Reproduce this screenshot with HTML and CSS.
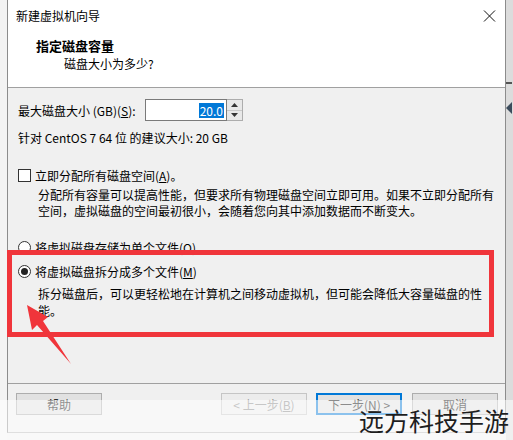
FILE: index.html
```html
<!DOCTYPE html>
<html lang="zh-CN">
<head>
    <meta charset="UTF-8">
    <title>新建虚拟机向导</title>
    <link rel="stylesheet" href="styles.css">
</head>
<body>

    <div class="page">
        <div class="side-left"></div>

        <div class="window">
            <div class="titlebar">
                <span>新建虚拟机向导</span>
                <svg class="close" width="13" height="12" viewBox="0 0 13 12">
                    <path d="M1 0.5 L12 11.5 M12 0.5 L1 11.5" stroke="#111" stroke-width="1" fill="none"/>
                </svg>
            </div>

            <div class="header">
                <h1>指定磁盘容量</h1>
                <p>磁盘大小为多少?</p>
            </div>

            <div class="content">
                <div class="size-row">
                    <span class="size-label">最大磁盘大小 (GB)(<u>S</u>):</span>
                    <div class="spin">
                        <div class="spin-field"><span class="sel">20.0</span></div>
                        <div class="spin-btns">
                            <div class="spin-btn"><svg width="7" height="4" viewBox="0 0 7 4"><path d="M0 4 L3.5 0 L7 4 Z" fill="#333"/></svg></div>
                            <div class="spin-btn"><svg width="7" height="4" viewBox="0 0 7 4"><path d="M0 0 L3.5 4 L7 0 Z" fill="#333"/></svg></div>
                        </div>
                    </div>
                </div>

                <div class="hint">针对 CentOS 7 64 位 的建议大小: 20 GB</div>

                <div class="option opt-alloc">
                    <span class="checkbox"></span>
                    <span>立即分配所有磁盘空间(<u>A</u>)。</span>
                </div>
                <p class="desc desc-alloc">分配所有容量可以提高性能，但要求所有物理磁盘空间立即可用。如果不立即分配所有<br>空间，虚拟磁盘的空间最初很小，会随着您向其中添加数据而不断变大。</p>

                <div class="option opt-single">
                    <span class="radio"></span>
                    <span>将虚拟磁盘存储为单个文件(<u>O</u>)</span>
                </div>
                <div class="option opt-multi">
                    <span class="radio checked"></span>
                    <span>将虚拟磁盘拆分成多个文件(<u>M</u>)</span>
                </div>
                <p class="desc desc-multi">拆分磁盘后，可以更轻松地在计算机之间移动虚拟机，但可能会降低大容量磁盘的性能。</p>
            </div>

            <div class="footer">
                <button class="btn">帮助</button>
                <button class="btn btn-prev disabled">&lt; 上一步(<u>B</u>)</button>
                <button class="btn btn-default">下一步(<u>N</u>) &gt;</button>
                <button class="btn">取消</button>
            </div>
        </div>

        <div class="side-right">
            <div class="mark-line"></div>
            <div class="mark-arrow"></div>
        </div>
    </div>

    <!-- annotation drawn over the screenshot -->
    <div class="annot-box"></div>
    <svg class="annot-arrow" width="513" height="440" viewBox="0 0 513 440">
        <polygon points="27,305 48,317 43,321 71,364 37,325 32,330" fill="#f0353b"/>
    </svg>

    <div class="wm-strip"><span>远方科技手游</span></div>

</body>
</html>
```

FILE: styles.css
```css
body {
    margin: 0;
    padding: 0;
    font-family: "Noto Sans CJK SC", "Noto Sans", sans-serif;
    font-size: 12px;
    color: #000;
    background-color: #f2f2f2;
    overflow: hidden;
}
.page {
    display: flex;
    height: 440px;
}
.side-left {
    width: 7px;
    background-color: #f3f3f3;
}
.window {
    width: 497px;
    height: 432px;
    display: flex;
    flex-direction: column;
    background-color: #f0f0f0;
    border-left: 1px solid #8c8c8c;
    border-right: 1px solid #8c8c8c;
    border-bottom: 1px solid #b9b9b9;
}
.side-right {
    flex: 1;
    background-color: #dcdcdc;
    position: relative;
}
.mark-line {
    margin-top: 82px;
    height: 2px;
    width: 6px;
    background-color: #555;
}
.mark-arrow {
    margin-top: 18px;
    width: 0;
    height: 0;
    border-top: 6px solid transparent;
    border-bottom: 6px solid transparent;
    border-right: 6px solid #3c4c5c;
}
.titlebar {
    height: 30px;
    background-color: #fff;
    display: flex;
    align-items: center;
    justify-content: space-between;
    padding: 0 9px 0 8px;
}
.close {
    margin-top: 1px;
}
.header {
    height: 50px;
    background-color: #fff;
    padding-top: 7px;
    border-bottom: 1px solid #a0a0a0;
}
.header h1 {
    margin: 0;
    padding-left: 28px;
    font-size: 13px;
    font-weight: bold;
    line-height: 18px;
}
.header p {
    margin: 0;
    padding-left: 56px;
    line-height: 17px;
}
.content {
    flex: 1;
    padding: 11px 4px 0 10px;
}
.size-row {
    display: flex;
    align-items: center;
    height: 22px;
}
.size-label {
    width: 127px;
}
.spin {
    display: flex;
    height: 22px;
}
.spin-field {
    width: 78px;
    height: 20px;
    border: 1px solid #7a7a7a;
    background-color: #fff;
    display: flex;
    align-items: center;
    justify-content: flex-end;
    padding-right: 2px;
}
.sel {
    background-color: #0078d7;
    color: #fff;
    line-height: 15px;
    padding: 0 1px;
}
.spin-btns {
    width: 15px;
    display: flex;
    flex-direction: column;
    border: 1px solid #adadad;
    border-left: none;
    height: 20px;
}
.spin-btn {
    flex: 1;
    display: flex;
    align-items: center;
    justify-content: center;
    background-color: #e8e8e8;
}
.spin-btn + .spin-btn {
    border-top: 1px solid #c8c8c8;
}
.hint {
    margin-top: 8px;
    line-height: 17px;
}
.option {
    display: flex;
    align-items: center;
    gap: 4px;
    line-height: 17px;
}
.opt-alloc {
    margin-top: 21px;
}
.opt-single {
    margin-top: 20px;
}
.opt-multi {
    margin-top: 7px;
}
.checkbox {
    width: 11px;
    height: 11px;
    border: 1px solid #333;
    background-color: #fff;
}
.radio {
    width: 11px;
    height: 11px;
    border: 1px solid #333;
    border-radius: 50%;
    background-color: #fff;
    display: flex;
    align-items: center;
    justify-content: center;
}
.radio.checked::after {
    content: "";
    width: 7px;
    height: 7px;
    border-radius: 50%;
    background-color: #222;
}
.desc {
    margin: 0;
    padding-left: 20px;
    white-space: nowrap;
}
.desc-alloc {
    margin-top: 3px;
    line-height: 16px;
}
.desc-multi {
    margin-top: 5px;
    line-height: 17px;
    white-space: normal;
    padding-right: 8px;
}
.footer {
    height: 39px;
    border-top: 1px solid #a0a0a0;
    display: flex;
    align-items: flex-start;
    padding: 9px 7px 0 8px;
}
.btn {
    width: 86px;
    height: 22px;
    font-family: inherit;
    font-size: 12px;
    color: #000;
    background-color: #e1e1e1;
    border: 1px solid #adadad;
    padding: 0;
}
.btn.disabled {
    color: #838383;
    background-color: #ececec;
    border-color: #c5c5c5;
}
.btn-prev {
    margin-left: auto;
}
.btn-default {
    margin-left: 9px;
    border: 2px solid #0078d7;
}
.btn-default + .btn {
    margin-left: 10px;
}
.annot-box {
    position: absolute;
    left: 7px;
    top: 250px;
    width: 477px;
    height: 77px;
    border: 5px solid #f0353b;
}
.annot-arrow {
    position: absolute;
    left: 0;
    top: 0;
}
.wm-strip {
    position: absolute;
    left: 0;
    top: 400px;
    width: 513px;
    height: 40px;
    background-color: rgba(255, 255, 255, 0.55);
    overflow: hidden;
    white-space: nowrap;
}
.wm-strip span {
    display: block;
    padding-left: 359px;
    font-size: 25px;
    line-height: 40px;
    color: #1e1e1e;
}
```
